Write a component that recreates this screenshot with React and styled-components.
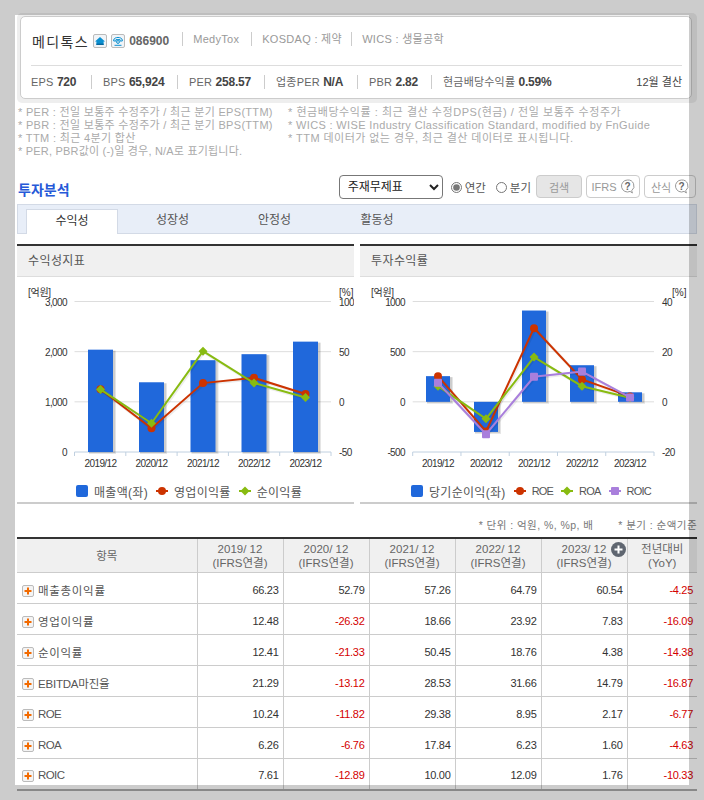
import React from 'react'
import styled, { createGlobalStyle } from 'styled-components'

const FONT = `"Liberation Sans", "Noto Sans CJK KR", sans-serif`

const GlobalStyle = createGlobalStyle`
  html, body {
    margin: 0;
    padding: 0;
    background: #fff;
    overflow: hidden;
    height: 100%;
  }
  body {
    font-family: ${FONT};
    font-size: 11px;
    color: #555;
  }
`

const Frame = styled.div`
  position: fixed;
  left: 0;
  top: 0;
  width: 704px;
  height: 800px;
  box-sizing: border-box;
  border: 15px solid rgba(0, 0, 0, 0.2);
  pointer-events: none;
  z-index: 10;
`

const Page = styled.div`
  width: 680px;
  padding: 13px 0 0 17px;
`

const CardWrap = styled.div`
  background: #eee;
  border-radius: 5px;
  padding: 3px 5px 4px 3px;
  height: 90px;
  box-sizing: border-box;
`

const Card = styled.div`
  background: #fff;
  border: 1px solid #ccc;
  border-radius: 5px;
  height: 100%;
  box-sizing: border-box;
  padding: 0 9px 0 10px;
  display: flex;
  flex-direction: column;
`

const TopRow = styled.div`
  height: 48px;
  padding-left: 1px;
  display: flex;
  align-items: center;
  border-bottom: 1px solid #ddd;
`

const BottomRow = styled.div`
  flex: 1;
  display: flex;
  align-items: center;
`

const Name = styled.span`
  font-size: 14px;
  letter-spacing: 1.4px;
  color: #333;
  margin-right: 4px;
`

const IconBtn = styled.span`
  width: 12px;
  height: 12px;
  border: 1px solid #bbb;
  border-radius: 2px;
  background: #f0f4f8;
  margin-right: 4px;
  display: flex;
  align-items: center;
  justify-content: center;
`

const Code = styled.b`
  font-size: 12px;
  color: #666;
  padding-right: 13px;
`

const Meta = styled.span`
  color: #999;
  letter-spacing: 0.3px;
  border-left: 1px solid #ccc;
  padding: 0 10px;
  margin-bottom: 4px;
  line-height: 14px;
  width: ${(p) => p.$w}px;
  white-space: nowrap;
`

const Stat = styled.span`
  color: #666;
  white-space: nowrap;
  box-sizing: border-box;
  padding-left: ${(p) => (p.$first ? 0 : 11)}px;
  line-height: 14px;
  border-left: ${(p) => (p.$first ? 'none' : '1px solid #ccc')};
  width: ${(p) => p.$w}px;
  letter-spacing: 0.2px;

  b {
    color: #444;
    font-size: 12px;
    letter-spacing: -0.2px;
  }
`

const Settle = styled.span`
  margin-left: auto;
  margin-bottom: 2px;
  color: #444;
  white-space: nowrap;
`

const Notes = styled.div`
  display: grid;
  grid-template-columns: 270px 1fr;
  padding: 3px 0 0 1px;
  font-size: 11px;
  line-height: 13px;
  color: #aaa;
  height: 51px;
  white-space: nowrap;
`

const NoteLine = styled.div`
  letter-spacing: ${(p) => p.$sp}px;
`

const Toolbar = styled.div`
  margin-top: 18px;
  height: 23px;
  display: flex;
  align-items: center;
  padding: 0 1px;
`

const Title = styled.h2`
  margin: 5px auto 0 0;
  font-size: 14px;
  font-weight: bold;
  color: #2659d8;
`

const Select = styled.select`
  width: 104px;
  height: 24px;
  border: 1px solid #777;
  border-radius: 4px;
  background: #fff;
  color: #222;
  font-family: ${FONT};
  font-size: 12px;
  padding-left: 4px;
  margin-right: 8px;
`

const RadioLabel = styled.label`
  display: flex;
  align-items: center;
  gap: 3px;
  color: #555;
  font-size: 11.5px;
  margin-right: ${(p) => p.$mr}px;
  white-space: nowrap;

  input {
    margin: 2px 0 0;
    width: 11px;
    height: 11px;
    accent-color: #777;
  }
`

const Button = styled.span`
  height: 23px;
  width: ${(p) => p.$w}px;
  box-sizing: border-box;
  margin-left: ${(p) => p.$ml}px;
  border: 1px solid #ccc;
  border-radius: 4px;
  background: ${(p) => (p.$fill ? '#e6e6e6' : '#fff')};
  color: #999;
  display: flex;
  align-items: center;
  justify-content: center;
  gap: 3px;
`

const TabBar = styled.div`
  margin-top: 6px;
  height: 30px;
  box-sizing: border-box;
  background: #e8eef8;
  border: 1px solid #d3dae6;
  padding: 4px 0 0 8px;
  display: flex;
`

const Tab = styled.div`
  width: ${(p) => p.$w}px;
  height: 25px;
  box-sizing: border-box;
  margin-bottom: -1px;
  text-align: center;
  line-height: 22px;
  font-size: 12px;
  color: ${(p) => (p.$on ? '#333' : '#555')};
  background: ${(p) => (p.$on ? '#fff' : 'transparent')};
  border: ${(p) => (p.$on ? '1px solid #d3dae6' : 'none')};
  border-bottom: none;
`

const Panels = styled.div`
  margin-top: 10px;
  display: grid;
  grid-template-columns: 337px 337px;
  column-gap: 6px;
`

const Panel = styled.section`
  border-top: 2px solid #333;
  border-bottom: 2px solid #ccc;
`

const PanelHead = styled.h3`
  margin: 0;
  height: 30px;
  line-height: 31px;
  padding-left: 11px;
  background: #f0f0f0;
  border-bottom: 1px solid #ddd;
  font-size: 12px;
  font-weight: normal;
  color: #555;
  letter-spacing: 0.4px;
`

const Legend = styled.div`
  height: 22px;
  display: flex;
  align-items: center;
  padding-left: ${(p) => p.$pl}px;
  color: #555;
  font-size: 12px;
  gap: 8px;
  white-space: nowrap;
`

const LegendItem = styled.span`
  display: flex;
  align-items: center;
  gap: 6px;
  letter-spacing: ${(p) => (p.$latin ? -0.8 : 0.3)}px;
  font-size: ${(p) => (p.$latin ? 11 : 12)}px;
`

const Swatch = styled.svg`
  display: block;
  flex: none;
`

const Units = styled.div`
  margin-top: 15px;
  height: 12px;
  line-height: 12px;
  display: flex;
  justify-content: flex-end;
  gap: 25px;
  font-size: 10.5px;
  letter-spacing: 0.45px;
  color: #777;
`

const Table = styled.table`
  margin-top: 6px;
  width: 680px;
  table-layout: fixed;
  border-collapse: collapse;
  border-top: 2px solid #333;
  border-bottom: 2px solid #aaa;
`

const Th = styled.th`
  position: relative;
  height: 32px;
  padding: 1px 0 0;
  background: #f0f0f0;
  border-bottom: 1px solid #ccc;
  border-left: ${(p) => (p.$first ? 'none' : '1px solid #ccc')};
  font-weight: normal;
  font-size: 11.5px;
  line-height: 14px;
  color: #666;
`

const PlusCircle = styled.svg`
  position: absolute;
  right: 1px;
  top: 3px;
`

const Td = styled.td`
  height: 31px;
  padding: 3px 4px 0 0;
  box-sizing: border-box;
  border-bottom: 1px solid #ccc;
  border-left: 1px solid #ccc;
  text-align: right;
  font-size: 11px;
  letter-spacing: -0.3px;
  color: ${(p) => (p.$neg ? '#d40000' : '#333')};
`

const ItemTd = styled.td`
  height: 31px;
  padding: 3px 0 0 5px;
  box-sizing: border-box;
  border-bottom: 1px solid #ccc;
  color: #555;
  font-size: 11.5px;
  letter-spacing: ${(p) => p.$sp}px;
`

const LastRow = styled.tr`
  td {
    border-bottom: none;
  }
`

const Item = styled.span`
  display: flex;
  align-items: center;
  gap: 4px;
`

const PlusBox = styled.span`
  width: 10px;
  height: 10px;
  flex: none;
  margin-top: 2px;
  border: 1px solid #bbb;
  border-radius: 2px;
  background: #f4f4f4;
  display: flex;
  align-items: center;
  justify-content: center;
`

const COLORS = { bar: '#2068db', red: '#cc3300', green: '#88bb11', purple: '#a97fdc' }
const YEARS = ['2019/12', '2020/12', '2021/12', '2022/12', '2023/12']

const Mark = ({ kind, x, y, color }) => {
  if (kind === 'circle') return <circle cx={x} cy={y} r="4" fill={color} />
  if (kind === 'square') return <rect x={x - 4} y={y - 4} width="8" height="8" rx="1" fill={color} />
  return <path d={`M${x} ${y - 4.5}L${x + 4.5} ${y}L${x} ${y + 4.5}L${x - 4.5} ${y}Z`} fill={color} />
}

const PLOT_TOP = 24.5
const PLOT_BOTTOM = 175

// same svg for both charts, only the scales and the series differ
const Chart = ({ x0, x1, centers, barW, left, leftText, right, bars, lines, labelX, rightX, unitX, pctX }) => {
  const scale = (ax, v) =>
    PLOT_BOTTOM - ((v - ax[ax.length - 1]) / (ax[0] - ax[ax.length - 1])) * (PLOT_BOTTOM - PLOT_TOP)
  const step = (x1 - x0) / 5
  const zero = scale(left, 0)

  return (
    <svg width="337" height="203" style={{ display: 'block' }} fontFamily={FONT} fontSize="10" fill="#333">
      <text x={unitX} y="19" letterSpacing="-0.3">[억원]</text>
      <text x={pctX} y="19">[%]</text>
      {left.map((v, i) => {
        const y = PLOT_TOP + (i * (PLOT_BOTTOM - PLOT_TOP)) / (left.length - 1)
        return (
          <g key={v}>
            {i < left.length - 1 && <line x1={x0} x2={x1} y1={y} y2={y} stroke="#ddd" />}
            <text x={labelX} y={y + 4} textAnchor="end" letterSpacing="-0.6">{leftText[i]}</text>
            <text x={rightX} y={y + 4} letterSpacing="-0.6">{right[i]}</text>
          </g>
        )
      })}
      <line x1={x0} x2={x1} y1={PLOT_BOTTOM} y2={PLOT_BOTTOM} stroke="#c0d0e0" />
      {[0, 1, 2, 3, 4, 5].map((i) => (
        <line key={i} x1={x0 + i * step} x2={x0 + i * step} y1={PLOT_BOTTOM} y2={PLOT_BOTTOM + 4} stroke="#c0d0e0" />
      ))}
      {YEARS.map((t, i) => (
        <text key={t} x={centers[i]} y={190} textAnchor="middle" letterSpacing="-0.6">{t}</text>
      ))}
      {bars.map((v, i) => {
        const y = scale(left, v)
        const top = Math.min(y, zero)
        const h = Math.abs(y - zero)
        const x = centers[i] - barW / 2
        return (
          <g key={i}>
            <rect x={x + 1} y={top + 1} width={barW + 2} height={h + 1} fill="#000" opacity="0.1" />
            <rect x={x + 1} y={top + 1} width={barW + 1} height={h} fill="#000" opacity="0.1" />
            <rect x={x} y={top} width={barW} height={h} fill={COLORS.bar} />
          </g>
        )
      })}
      {lines.map((s) => {
        const pts = s.data.map((v, i) => [centers[i], scale(right, v)])
        const str = pts.map((p) => p.join(',')).join(' ')
        return (
          <g key={s.name}>
            <polyline points={str} fill="none" stroke="#000" strokeWidth="3" opacity="0.07" transform="translate(1 1)" />
            <polyline points={str} fill="none" stroke={s.color} strokeWidth="2" />
            {pts.map(([x, y], i) => (
              <Mark key={i} kind={s.kind} x={x} y={y} color={s.color} />
            ))}
          </g>
        )
      })}
    </svg>
  )
}

const LineSwatch = ({ kind, color }) => (
  <Swatch width="12" height="12" viewBox="0 0 12 12">
    <line x1="0" x2="12" y1="6" y2="6" stroke={color} strokeWidth="2" />
    <Mark kind={kind} x={6} y={6} color={color} />
  </Swatch>
)

const BarSwatch = () => (
  <Swatch width="12" height="12" viewBox="0 0 12 12">
    <rect width="12" height="12" rx="2" fill={COLORS.bar} />
  </Swatch>
)

const HomeIcon = () => (
  <svg width="10" height="10" viewBox="0 0 10 10">
    <path d="M5 1L10 5.5H8.6V9H1.4V5.5H0Z" fill="#0a8fd0" />
    <rect x="1.4" y="7.6" width="7.2" height="1.4" fill="#06659c" />
  </svg>
)

const PhoneIcon = () => (
  <svg width="10" height="10" viewBox="0 0 10 10" fill="none" stroke="#0a8fd0">
    <path d="M0.7 4C1.2 0.6 8.8 0.6 9.3 4V5H7V3.6H3V5H0.7Z" />
    <circle cx="5" cy="6" r="1.4" />
    <path d="M1.5 9.3H8.5" />
  </svg>
)

const HelpIcon = () => (
  <svg width="15" height="15" viewBox="0 0 15 15">
    <path d="M7.5 1a6 6 0 1 0 2.6 11.4L12.4 14 11.7 11.7A6 6 0 0 0 7.5 1Z" fill="#fff" stroke="#999" />
    <text x="7.5" y="11" textAnchor="middle" fontFamily={FONT} fontSize="10" fontWeight="bold" fill="#666">?</text>
  </svg>
)

const ROWS = [
  { sp: 0.7, cells: ['매출총이익률', '66.23', '52.79', '57.26', '64.79', '60.54', '-4.25'] },
  { sp: 0.7, cells: ['영업이익률', '12.48', '-26.32', '18.66', '23.92', '7.83', '-16.09'] },
  { sp: 0.7, cells: ['순이익률', '12.41', '-21.33', '50.45', '18.76', '4.38', '-14.38'] },
  { sp: -0.2, cells: ['EBITDA마진율', '21.29', '-13.12', '28.53', '31.66', '14.79', '-16.87'] },
  { sp: -0.6, cells: ['ROE', '10.24', '-11.82', '29.38', '8.95', '2.17', '-6.77'] },
  { sp: -0.6, cells: ['ROA', '6.26', '-6.76', '17.84', '6.23', '1.60', '-4.63'] },
  { sp: -0.6, cells: ['ROIC', '7.61', '-12.89', '10.00', '12.09', '1.76', '-10.33'] },
]

const COLS = [180, 86, 86, 86, 86, 86, 70]

const Row = ({ cells, sp, last }) => {
  const Tr = last ? LastRow : 'tr'
  return (
    <Tr>
      <ItemTd $sp={sp}>
        <Item>
          <PlusBox>
            <svg width="8" height="8" viewBox="0 0 8 8">
              <path d="M3 0.5H5V3H7.5V5H5V7.5H3V5H0.5V3H3Z" fill="#f26a00" />
            </svg>
          </PlusBox>
          {cells[0]}
        </Item>
      </ItemTd>
      {cells.slice(1).map((c, i) => (
        <Td key={i} $neg={c.startsWith('-')}>{c}</Td>
      ))}
    </Tr>
  )
}

export default function App() {
  return (
    <>
      <GlobalStyle />
      <Page>
        <CardWrap>
          <Card>
            <TopRow>
              <Name>메디톡스</Name>
              <IconBtn><HomeIcon /></IconBtn>
              <IconBtn><PhoneIcon /></IconBtn>
              <Code>086900</Code>
              <Meta $w={48}>MedyTox</Meta>
              <Meta $w={79}>KOSDAQ : 제약</Meta>
              <Meta $w={80}>WICS : 생물공학</Meta>
            </TopRow>
            <BottomRow>
              <Stat $first $w={60}>EPS <b>720</b></Stat>
              <Stat $w={86}>BPS <b>65,924</b></Stat>
              <Stat $w={87}>PER <b>258.57</b></Stat>
              <Stat $w={93}>업종PER <b>N/A</b></Stat>
              <Stat $w={74}>PBR <b>2.82</b></Stat>
              <Stat>현금배당수익률 <b>0.59%</b></Stat>
              <Settle>12월 결산</Settle>
            </BottomRow>
          </Card>
        </CardWrap>

        <Notes>
          <div>
            <NoteLine $sp={0.3}>* PER : 전일 보통주 수정주가 / 최근 분기 EPS(TTM)</NoteLine>
            <NoteLine $sp={0.3}>* PBR : 전일 보통주 수정주가 / 최근 분기 BPS(TTM)</NoteLine>
            <NoteLine $sp={0.35}>* TTM : 최근 4분기 합산</NoteLine>
            <NoteLine $sp={0.2}>* PER, PBR값이 (-)일 경우, N/A로 표기됩니다.</NoteLine>
          </div>
          <div>
            <NoteLine $sp={0.55}>* 현금배당수익률 : 최근 결산 수정DPS(현금) / 전일 보통주 수정주가</NoteLine>
            <NoteLine $sp={0.35}>* WICS : WISE Industry Classification Standard, modified by FnGuide</NoteLine>
            <NoteLine $sp={0.45}>* TTM 데이터가 없는 경우, 최근 결산 데이터로 표시됩니다.</NoteLine>
          </div>
        </Notes>

        <Toolbar>
          <Title>투자분석</Title>
          <Select defaultValue="main">
            <option value="main">주재무제표</option>
          </Select>
          <RadioLabel $mr={10}>
            <input type="radio" name="term" defaultChecked />
            연간
          </RadioLabel>
          <RadioLabel $mr={0}>
            <input type="radio" name="term" />
            분기
          </RadioLabel>
          <Button $fill $w={46} $ml={5}>검색</Button>
          <Button $w={54} $ml={4}>IFRS <HelpIcon /></Button>
          <Button $w={52} $ml={4}>산식 <HelpIcon /></Button>
        </Toolbar>

        <TabBar>
          <Tab $on $w={92}>수익성</Tab>
          <Tab $w={109}>성장성</Tab>
          <Tab $w={95}>안정성</Tab>
          <Tab $w={110}>활동성</Tab>
        </TabBar>

        <Panels>
          <Panel>
            <PanelHead>수익성지표</PanelHead>
            <Chart
              x0={57.5}
              x1={314}
              centers={[83.5, 134.5, 186, 237, 288.5]}
              barW={25}
              left={[3000, 2000, 1000, 0]}
              leftText={['3,000', '2,000', '1,000', '0']}
              right={[100, 50, 0, -50]}
              bars={[2040, 1390, 1830, 1950, 2200]}
              lines={[
                { name: 'op', kind: 'circle', color: COLORS.red, data: [12.48, -26.32, 18.66, 23.92, 7.83] },
                { name: 'net', kind: 'diamond', color: COLORS.green, data: [12.41, -21.33, 50.45, 18.76, 4.38] },
              ]}
              labelX={50}
              rightX={322}
              unitX={11}
              pctX={322}
            />
            <Legend $pl={59}>
              <LegendItem><BarSwatch />매출액(좌)</LegendItem>
              <LegendItem><LineSwatch kind="circle" color={COLORS.red} />영업이익률</LegendItem>
              <LegendItem><LineSwatch kind="diamond" color={COLORS.green} />순이익률</LegendItem>
            </Legend>
          </Panel>
          <Panel>
            <PanelHead>투자수익률</PanelHead>
            <Chart
              x0={52.7}
              x1={294}
              centers={[78, 126, 174, 222, 270]}
              barW={24}
              left={[1000, 500, 0, -500]}
              leftText={['1000', '500', '0', '-500']}
              right={[40, 20, 0, -20]}
              bars={[256, -300, 910, 365, 95]}
              lines={[
                { name: 'roe', kind: 'circle', color: COLORS.red, data: [10.24, -11.82, 29.38, 8.95, 2.17] },
                { name: 'roa', kind: 'diamond', color: COLORS.green, data: [6.26, -6.76, 17.84, 6.23, 1.6] },
                { name: 'roic', kind: 'square', color: COLORS.purple, data: [7.61, -12.89, 10, 12.09, 1.76] },
              ]}
              labelX={45}
              rightX={302}
              unitX={11}
              pctX={312}
            />
            <Legend $pl={51}>
              <LegendItem><BarSwatch />당기순이익(좌)</LegendItem>
              <LegendItem $latin><LineSwatch kind="circle" color={COLORS.red} />ROE</LegendItem>
              <LegendItem $latin><LineSwatch kind="diamond" color={COLORS.green} />ROA</LegendItem>
              <LegendItem $latin><LineSwatch kind="square" color={COLORS.purple} />ROIC</LegendItem>
            </Legend>
          </Panel>
        </Panels>

        <Units>
          <span>* 단위 : 억원, %, %p, 배</span>
          <span>* 분기 : 순액기준</span>
        </Units>

        <Table>
          <colgroup>
            {COLS.map((w, i) => <col key={i} width={w} />)}
          </colgroup>
          <thead>
            <tr>
              <Th $first>항목</Th>
              {['2019', '2020', '2021', '2022', '2023'].map((y) => (
                <Th key={y}>
                  {y}/ 12<br />(IFRS연결)
                  {y === '2023' && (
                    <PlusCircle width="15" height="15" viewBox="0 0 15 15">
                      <circle cx="7.5" cy="7.5" r="7.5" fill="#5f6670" />
                      <path d="M6.5 3.5H8.5V6.5H11.5V8.5H8.5V11.5H6.5V8.5H3.5V6.5H6.5Z" fill="#fff" />
                    </PlusCircle>
                  )}
                </Th>
              ))}
              <Th>전년대비<br />(YoY)</Th>
            </tr>
          </thead>
          <tbody>
            {ROWS.map((r, i) => (
              <Row key={r.cells[0]} cells={r.cells} sp={r.sp} last={i === ROWS.length - 1} />
            ))}
          </tbody>
        </Table>
      </Page>
      <Frame />
    </>
  )
}
